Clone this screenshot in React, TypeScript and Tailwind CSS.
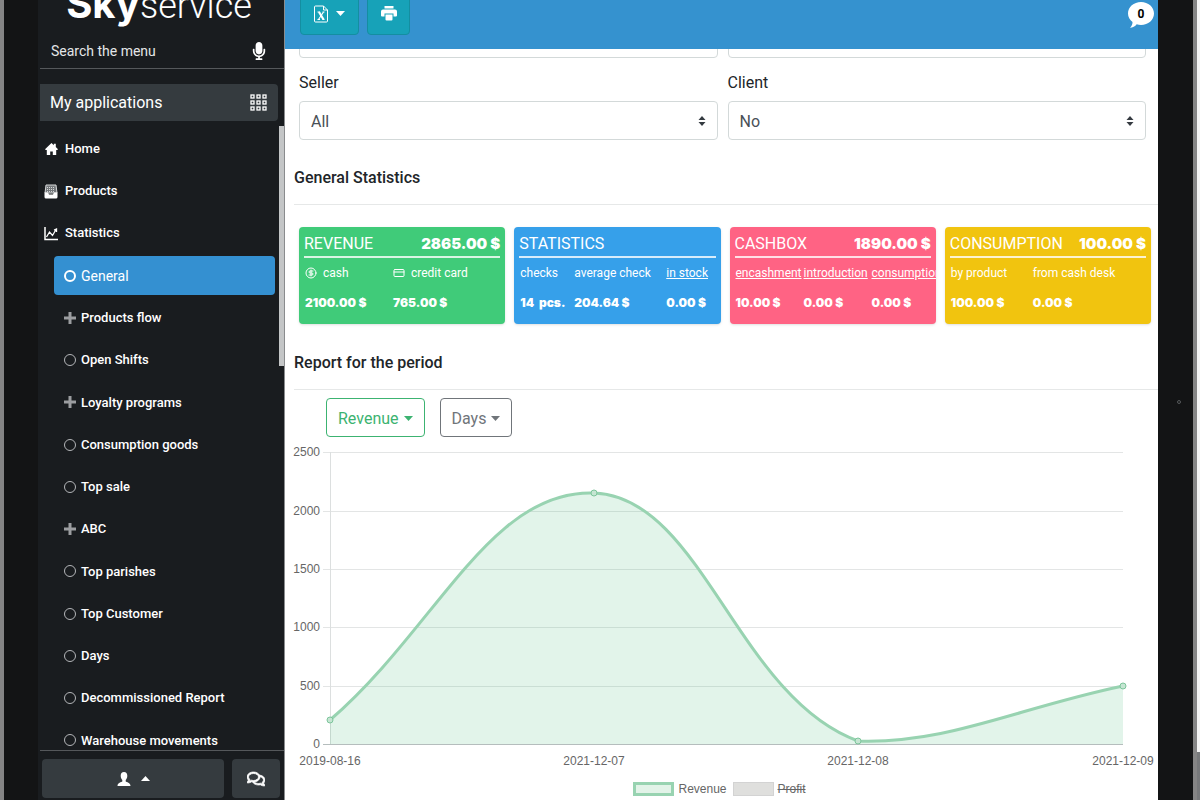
import type { ReactNode } from "react";
import clsx from "clsx";
import { FaMicrophone, FaRegComments } from "react-icons/fa";
import { CircleDollarSign, CreditCard } from "lucide-react";

const submenu = [
  { label: "General", active: true },
  { label: "Products flow", nested: true },
  { label: "Open Shifts" },
  { label: "Loyalty programs", nested: true },
  { label: "Consumption goods" },
  { label: "Top sale" },
  { label: "ABC", nested: true },
  { label: "Top parishes" },
  { label: "Top Customer" },
  { label: "Days" },
  { label: "Decommissioned Report" },
  { label: "Warehouse movements" },
];

type Column = { label: string; value: string; width: string; link?: boolean; icon?: ReactNode };
type Stat = { title: string; total?: string; color: string; columns: Column[] };

const stats: Stat[] = [
  {
    title: "REVENUE",
    total: "2865.00 $",
    color: "bg-[#40cb79]",
    columns: [
      {
        label: "cash",
        value: "2100.00 $",
        width: "w-[88px]",
        icon: <CircleDollarSign size={12} className="shrink-0" />,
      },
      {
        label: "credit card",
        value: "765.00 $",
        width: "w-[110px]",
        icon: <CreditCard size={12} className="shrink-0" />,
      },
    ],
  },
  {
    title: "STATISTICS",
    color: "bg-[#36a0ea]",
    columns: [
      { label: "checks", value: "14  pcs.", width: "w-[54px]" },
      { label: "average check", value: "204.64 $", width: "w-[92px]" },
      { label: "in stock", value: "0.00 $", width: "w-[52px]", link: true },
    ],
  },
  {
    title: "CASHBOX",
    total: "1890.00 $",
    color: "bg-[#ff6384]",
    columns: [
      { label: "encashment", value: "10.00 $", width: "w-[68px]", link: true },
      { label: "introduction", value: "0.00 $", width: "w-[68px]", link: true },
      { label: "consumption", value: "0.00 $", width: "w-[68px]", link: true },
    ],
  },
  {
    title: "CONSUMPTION",
    total: "100.00 $",
    color: "bg-[#f1c40f]",
    columns: [
      { label: "by product", value: "100.00 $", width: "w-[82px]" },
      { label: "from cash desk", value: "0.00 $", width: "w-[116px]" },
    ],
  },
];

const gridLines = [
  { value: 2500, y: 15 },
  { value: 2000, y: 74 },
  { value: 1500, y: 132 },
  { value: 1000, y: 190 },
  { value: 500, y: 249 },
  { value: 0, y: 307 },
];

const dates = [
  { label: "2019-08-16", x: 45 },
  { label: "2021-12-07", x: 309 },
  { label: "2021-12-08", x: 573 },
  { label: "2021-12-09", x: 838 },
];

const points = [
  [45, 283],
  [309, 56],
  [573, 304],
  [838, 249],
];

const curve = "M45 283C151 192 205 52 309 56C417 60 452 260 573 304C663 307 732 271 838 249";

function Caret({ up = false }: { up?: boolean }) {
  return (
    <svg width="9" height="5" viewBox="0 0 9 5" fill="currentColor" aria-hidden="true">
      <path d={up ? "M0 5L4.500 0L9 5Z" : "M0 0H9L4.500 5Z"} />
    </svg>
  );
}

function HomeIcon() {
  return (
    <svg width="13" height="12" viewBox="0 0 13 12" fill="white" aria-hidden="true">
      <path d="M6.500 0L8.800 2.200V0.800H10.800V4L13 6.200L12.200 7H11.200V12H7.800V8.500H5.200V12H1.800V7H0.800L0 6.200Z" />
    </svg>
  );
}

function ProductsIcon() {
  return (
    <svg width="14" height="15" viewBox="0 0 14 15" fill="none" aria-hidden="true">
      <path d="M2 1H12L13 9H1Z" fill="#74787b" stroke="#d5d7d8" />
      <path d="M3 3.500H11M3 5.500H11M3 7.500H11" stroke="#d5d7d8" strokeDasharray="1 1" />
      <path d="M0.500 8.500H4L5 10.500H9L10 8.500H13.500V13Q13.500 14.500 12 14.500H2Q0.500 14.500 0.500 13Z" fill="white" />
    </svg>
  );
}

function StatisticsIcon() {
  return (
    <svg width="14" height="15" viewBox="0 0 14 15" fill="none" stroke="white" aria-hidden="true">
      <path d="M1 1V13.500H14" strokeWidth="1.500" />
      <path d="M2.500 11L5.500 6L8.500 9.500L12 3.500M12.500 6V3L10 4" strokeWidth="1.300" />
    </svg>
  );
}

function PlusIcon() {
  return (
    <svg width="12" height="12" viewBox="0 0 12 12" stroke="#9b9da0" strokeWidth="3" aria-hidden="true">
      <path d="M6 0V12M0 6H12" />
    </svg>
  );
}

function GridIcon() {
  return (
    <svg width="17" height="18" viewBox="0 0 17 18" fill="none" stroke="white" strokeWidth="1.300" aria-hidden="true">
      {[1, 7, 13].map((y) =>
        [1, 7, 13].map((x) => <rect key={`${x}-${y}`} x={x} y={y} width="3" height="3" />),
      )}
    </svg>
  );
}

function ExcelIcon() {
  return (
    <svg width="14" height="18" viewBox="0 0 14 18" fill="none" stroke="white" aria-hidden="true">
      <path d="M0.500 2Q0.500 1 1.500 1H9.500L13.500 5V16Q13.500 17 12.500 17H1.500Q0.500 17 0.500 16Z" />
      <path d="M9.500 1V5H13.500" />
      <path d="M5 7L9.500 14.500" strokeWidth="2.200" />
      <path d="M9.500 7L4.500 14.500M3.500 7H6M8.500 7H10.500M3.500 14.500H6M8.500 14.500H10.500" strokeWidth="1.200" />
    </svg>
  );
}

function PrintIcon() {
  return (
    <svg width="16" height="15" viewBox="0 0 16 15" fill="white" aria-hidden="true">
      <path d="M3.500 0H12.500V2.500H3.500Z" />
      <path d="M2 3.500H14Q16 3.500 16 5.500V9.500Q16 10.500 15 10.500H12.500V7.500H3.500V10.500H1Q0 10.500 0 9.500V5.500Q0 3.500 2 3.500Z" />
      <path d="M4.500 8.500H11.500V13.500Q11.500 14.500 10.500 14.500H5.500Q4.500 14.500 4.500 13.500Z" />
    </svg>
  );
}

function UserIcon() {
  return (
    <svg width="14" height="14" viewBox="0 0 14 14" fill="white" aria-hidden="true">
      <path d="M7 0C9.200 0 10.300 1.600 10.300 3.800C10.300 5.800 9.500 7.300 8.700 8V9.500C9.500 10.200 13.500 10.500 13.500 14H0.500C0.500 10.500 4.500 10.200 5.300 9.500V8C4.500 7.300 3.700 5.800 3.700 3.800C3.700 1.600 4.800 0 7 0Z" />
    </svg>
  );
}

function Select({ id, label, value }: { id: string; label: string; value: string }) {
  return (
    <div className="relative">
      <select
        id={id}
        aria-label={label}
        className="block h-[39px] w-full appearance-none rounded border border-[#d3d9d9] bg-white px-[11px] pt-[2px] text-base text-[#495057]"
      >
        <option>{value}</option>
      </select>
      <svg
        className="pointer-events-none absolute top-1/2 right-3 -translate-y-1/2"
        width="8"
        height="10"
        viewBox="0 0 8 10"
        fill="#343a40"
        aria-hidden="true"
      >
        <path d="M0.500 4L4 0L7.500 4ZM0.500 6L4 10L7.500 6Z" />
      </svg>
    </div>
  );
}

function Field({ id, label, value }: { id: string; label: string; value: string }) {
  return (
    <div className="flex flex-col gap-[6px]">
      <label htmlFor={id} className="text-base leading-6">
        {label}
      </label>
      <Select id={id} label={label} value={value} />
    </div>
  );
}

function Heading({ children }: { children: ReactNode }) {
  return (
    <h2 className="ml-[9px] border-b border-[#e6e8e8] pb-[14px] text-base leading-6 font-medium">{children}</h2>
  );
}

function StatCard({ title, total, color, columns }: Stat) {
  return (
    <article className={clsx("h-[97px] overflow-hidden rounded px-[5px] pt-[5px] text-white shadow", color)}>
      <div className="flex h-[26px] items-center justify-between border-b-2 border-white/80">
        <h3 className="text-base">{title}</h3>
        {total && <strong className="font-[Inter,sans-serif] text-[15px] font-black whitespace-nowrap">{total}</strong>}
      </div>
      <table className="w-max table-fixed text-left">
        <thead>
          <tr className="h-[30px]">
            {columns.map(({ label, width, link, icon }) => (
              <th key={label} className={clsx("p-0 pl-px text-xs font-normal whitespace-nowrap", width)}>
                {/* longer captions run over the edge of their column */}
                <div className="flex w-0 items-center gap-[6px]">
                  {icon}
                  {link ? (
                    <a href="#details" className="underline">
                      {label}
                    </a>
                  ) : (
                    <span>{label}</span>
                  )}
                </div>
              </th>
            ))}
          </tr>
        </thead>
        <tbody>
          <tr className="h-[30px]">
            {columns.map(({ label, value }) => (
              <td key={label} className="p-0 pl-px font-[Inter,sans-serif] text-xs font-black whitespace-pre">
                {value}
              </td>
            ))}
          </tr>
        </tbody>
      </table>
    </article>
  );
}

function Sidebar() {
  return (
    <aside className="flex w-[247px] shrink-0 flex-col overflow-hidden border-r border-[#8a8c8e] bg-[#191c1f] pl-[2px] text-white">
      <div className="h-[34px] shrink-0">
        <div className="-mt-[14px] flex items-baseline justify-center pr-[6px] leading-9">
          <span className="font-[Inter,sans-serif] text-[40px] leading-9 font-bold">Sky</span>
          <span className="text-4xl leading-9 font-light">service</span>
        </div>
      </div>
      <div className="flex h-[35px] shrink-0 items-center border-b border-[#55585b] pr-4 pl-[11px]">
        <input
          type="text"
          aria-label="Search the menu"
          placeholder="Search the menu"
          className="min-w-0 flex-1 bg-transparent text-sm placeholder:text-[#e4e6e8]"
        />
        <button type="button" aria-label="Voice search">
          <FaMicrophone size={18} />
        </button>
      </div>
      <button
        type="button"
        className="mt-[15px] mr-[6px] flex h-[37px] shrink-0 items-center justify-between rounded-r bg-[#353b3f] pr-[11px] pl-[10px] text-base"
      >
        My applications
        <GridIcon />
      </button>

      <div className="mt-[5px] flex min-h-0 flex-1 justify-between overflow-hidden">
        <nav className="flex-1 pt-[2px] text-[13px] font-medium">
          <ul>
            {[
              { label: "Home", icon: <HomeIcon /> },
              { label: "Products", icon: <ProductsIcon /> },
              { label: "Statistics", icon: <StatisticsIcon /> },
            ].map(({ label, icon }) => (
              <li key={label}>
                <a href="#menu" className="flex h-[42px] items-center gap-[7px] pl-1">
                  <span className="flex w-[14px] justify-center">{icon}</span>
                  {label}
                </a>
              </li>
            ))}
          </ul>
          <ul className="mt-[2px] mr-1 ml-[14px] flex h-[504px] flex-col justify-between">
            {submenu.map(({ label, active, nested }) => (
              <li key={label}>
                <a
                  href="#menu"
                  className={clsx(
                    "flex h-[39px] items-center gap-[5px] rounded pl-[10px]",
                    active && "bg-[#3490d1] text-sm font-normal",
                  )}
                >
                  {nested ? (
                    <PlusIcon />
                  ) : (
                    <span
                      className={clsx("size-3 rounded-full", active ? "border-2 border-white" : "border border-[#b4b6b9]")}
                    />
                  )}
                  {label}
                </a>
              </li>
            ))}
          </ul>
        </nav>
        <div className="h-[240px] w-[5px] bg-[#c4c6c7]" />
      </div>

      <div className="flex h-[50px] shrink-0 gap-2 border-t border-[#55585b] pt-2 pr-1 pb-[2px] pl-[2px]">
        <button
          type="button"
          aria-label="Account"
          className="flex flex-1 items-center justify-center gap-[10px] rounded bg-[#353b3f]"
        >
          <UserIcon />
          <Caret up />
        </button>
        <button type="button" aria-label="Messages" className="flex w-12 items-center justify-center rounded bg-[#353b3f]">
          <FaRegComments size={18} stroke="white" strokeWidth="24" />
        </button>
      </div>
    </aside>
  );
}

function TopBar() {
  const tool =
    "-mt-1 flex h-[39px] items-center justify-center gap-2 rounded border border-[#148ea1] bg-[#17a2b8] pb-1 text-white";

  return (
    <header className="flex h-[49px] shrink-0 items-start justify-between bg-[#3592cf] pr-1 pl-[15px]">
      <div className="flex gap-2">
        <button type="button" aria-label="Export to Excel" className={clsx(tool, "w-[59px]")}>
          <ExcelIcon />
          <Caret />
        </button>
        <button type="button" aria-label="Print" className={clsx(tool, "w-[43px]")}>
          <PrintIcon />
        </button>
      </div>
      <button type="button" aria-label="Notifications" className="relative mt-[2px] h-[26px] w-[26px]">
        <svg width="26" height="26" viewBox="0 0 26 26" fill="white" aria-hidden="true">
          <path d="M13 0C20.200 0 26 5 26 11.500S20.200 23 13 23C11.500 23 10 22.800 8.700 22.300C7.200 24.300 4.500 25.800 2 25.800C3.800 24 4.600 21.800 4.500 19.900C1.800 17.800 0 14.900 0 11.500C0 5 5.800 0 13 0Z" />
        </svg>
        <span className="absolute inset-x-0 top-1 text-xs leading-4 font-bold text-black">0</span>
      </button>
    </header>
  );
}

function Chart() {
  return (
    <figure>
      <svg viewBox="0 0 873 338" className="w-full font-['Liberation_Sans',sans-serif] text-xs" fill="#666">
        {gridLines.map(({ value, y }) => (
          <g key={value}>
            <line x1="38" x2="838" y1={y + 0.5} y2={y + 0.5} stroke={value ? "#e3e5e5" : "#b5bdbd"} />
            <text x="35" y={y + 4} textAnchor="end">
              {value}
            </text>
          </g>
        ))}
        <line x1="45.500" x2="45.500" y1="15" y2="307" stroke="#dcdfdf" />
        <path d={`${curve}V307H45Z`} fill="#3cb371" fillOpacity="0.150" />
        <path d={curve} fill="none" stroke="#98d3b1" strokeWidth="3" />
        {points.map(([x, y]) => (
          <circle key={x} cx={x} cy={y} r="3" fill="#c5e5d2" stroke="#7cc59b" />
        ))}
        {dates.map(({ label, x }) => (
          <text key={label} x={x} y="328" textAnchor="middle">
            {label}
          </text>
        ))}
      </svg>
      <figcaption className="flex h-7 items-center justify-center gap-[6px] pr-1 font-['Liberation_Sans',sans-serif] text-xs text-[#666]">
        <button type="button" className="flex items-center gap-1">
          <span className="h-[14px] w-[41px] border-[3px] border-[#98d3b1] bg-[#e2f3e8]" />
          Revenue
        </button>
        <button type="button" className="flex items-center gap-1 line-through">
          <span className="h-[14px] w-[41px] border border-[#d3d3d3] bg-[#dfdfdd]" />
          Profit
        </button>
      </figcaption>
    </figure>
  );
}

export default function App() {
  const dropdown = "flex h-[39px] items-center gap-[5px] rounded border px-[11px] pt-[2px] text-base";

  return (
    <div className="flex h-screen overflow-hidden bg-[#131415] font-[Roboto,sans-serif] text-[#212529]">
      {/* Left bezel */}
      <div className="w-[38px] shrink-0 border-l-4 border-[#858585]" />
      <Sidebar />
      <div className="flex min-w-0 flex-1 flex-col bg-white">
        <TopBar />
        <main className="min-h-0 flex-1 overflow-hidden">
          <div className="-mt-[30px] grid grid-cols-2 gap-x-[10px] gap-y-[13px] pr-3 pl-[14px]">
            <Select id="shop" label="Shop" value="" />
            <Select id="cashbox" label="Cashbox" value="" />
            <Field id="seller" label="Seller" value="All" />
            <Field id="client" label="Client" value="No" />
          </div>

          <section className="mt-[26px]">
            <Heading>General Statistics</Heading>
            <div className="mt-[22px] grid grid-cols-4 gap-[9px] pr-[7px] pl-[14px]">
              {stats.map((stat) => (
                <StatCard key={stat.title} {...stat} />
              ))}
            </div>
          </section>

          <section className="mt-[27px]">
            <Heading>Report for the period</Heading>
            <div className="mt-2 flex gap-[15px] pl-[41px]">
              <button type="button" className={clsx(dropdown, "border-[#3cb371] text-[#3cb371]")}>
                Revenue
                <Caret />
              </button>
              <button type="button" className={clsx(dropdown, "border-[#70757a] text-[#70757a]")}>
                Days
                <Caret />
              </button>
            </div>
            <Chart />
          </section>
        </main>
      </div>
      {/* Right bezel with the camera */}
      <div className="flex w-[39px] shrink-0 items-center justify-center border-r-4 border-[#858585] pt-1 pl-[6px]">
        <span className="size-1 rounded-full border border-[#56595b]" />
      </div>
      <div className="flex w-[3px] shrink-0 flex-col justify-end bg-[#f4f4f4]">
        <div className="h-12 bg-[#77797b]" />
      </div>
    </div>
  );
}
